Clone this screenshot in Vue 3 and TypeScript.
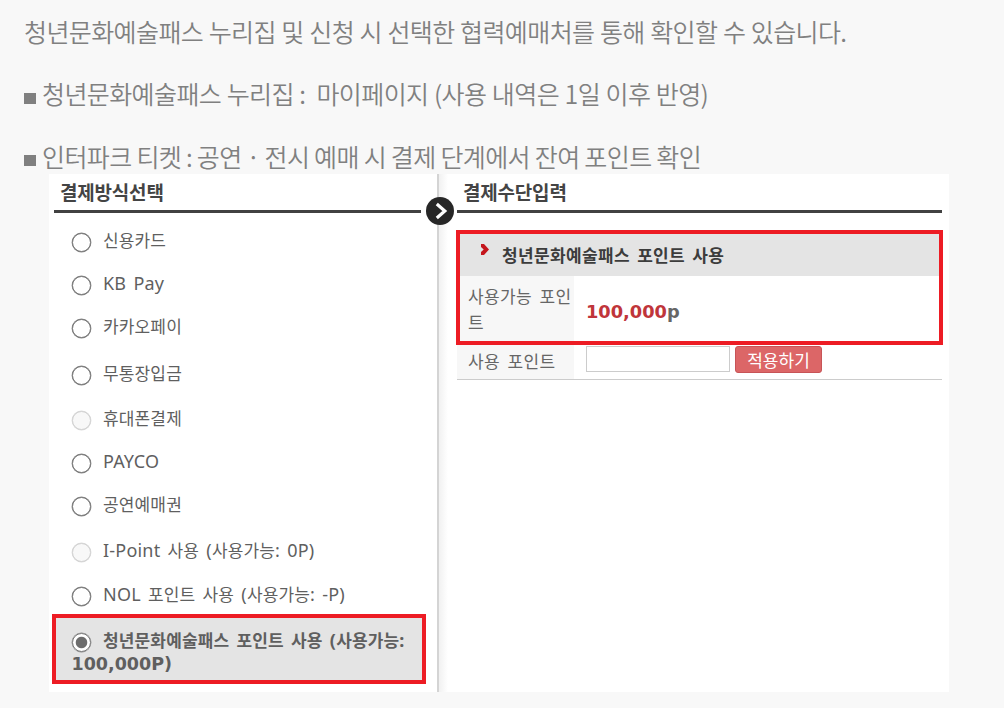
<script setup lang="ts">
interface Option {
  label: string
  disabled?: boolean
}
interface Run {
  text: string
  hangul: boolean
}

const options: Option[] = [
  { label: '신용카드' },
  { label: 'KB Pay' },
  { label: '카카오페이' },
  { label: '무통장입금' },
  { label: '휴대폰결제', disabled: true },
  { label: 'PAYCO' },
  { label: '공연예매권' },
  { label: 'I-Point 사용 (사용가능: 0P)', disabled: true },
  { label: 'NOL 포인트 사용 (사용가능: -P)' },
]

// Splits a label into Hangul and Latin runs so each gets its own type size.
function runs(text: string): Run[] {
  return (text.match(/[가-힣]+|[^가-힣]+/g) ?? []).map((part) => ({
    text: part,
    hangul: /[가-힣]/.test(part),
  }))
}
</script>

<template>
  <main class="page">
    <p class="line intro">청년문화예술패스 누리집 및 신청 시 선택한 협력예매처를 통해 확인할 수 있습니다.</p>
    <p class="line site"><i class="square"></i><span>청년문화예술패스 누리집 :&nbsp; 마이페이지 (사용 내역은 1일 이후 반영)</span></p>
    <p class="line ticket"><i class="square"></i><span>인터파크 티켓 : 공연 · 전시 예매 시 결제 단계에서 잔여 포인트 확인</span></p>

    <section class="panel">
      <div class="left">
        <h2 class="title">결제방식선택</h2>
        <ul class="options">
          <li v-for="o in options" :key="o.label" class="option">
            <i class="radio" :class="{ disabled: o.disabled }"></i>
            <span class="label"><span v-for="(r, i) in runs(o.label)" :key="i" :class="r.hangul ? 'ko' : 'en'">{{ r.text }}</span></span>
          </li>
        </ul>
        <div class="chosen">
          <div class="chosen-row">
            <i class="radio on"></i>
            <span class="label"><span v-for="(r, i) in runs('청년문화예술패스 포인트 사용 (사용가능:')" :key="i" :class="r.hangul ? 'ko' : 'en'">{{ r.text }}</span></span>
          </div>
          <div class="amount">100,000P)</div>
        </div>
      </div>

      <div class="divider">
        <svg class="next" viewBox="0 0 28 28" width="28" height="28">
          <circle cx="14" cy="14" r="14" fill="#272727" />
          <path d="M10.8 7 L18.8 14 L10.8 21" fill="none" stroke="#fff" stroke-width="3.2" />
        </svg>
      </div>

      <div class="right">
        <h2 class="title">결제수단입력</h2>
        <div class="box">
          <div class="box-head">
            <svg class="mark" viewBox="0 0 8 11" width="8" height="11">
              <path d="M0 0H3L8 5.5L3 11H0V8L2.7 5.5L0 3Z" fill="#c4161c" />
            </svg>
            <span>청년문화예술패스 포인트 사용</span>
          </div>
          <div class="box-row">
            <div class="name">사용가능 포인<br />트</div>
            <div class="value"><b>100,000</b>p</div>
          </div>
        </div>
        <div class="use-row">
          <div class="name">사용 포인트</div>
          <input class="field" type="text" aria-label="사용 포인트" />
          <button class="apply" type="button">적용하기</button>
        </div>
      </div>
    </section>
  </main>
</template>

<style>
body {
  margin: 0;
  background: #f8f8f8;
}
</style>

<style scoped>
.page {
  width: 1004px;
  height: 708px;
  overflow: hidden;
  background: #f8f8f8;
  box-sizing: border-box;
  padding-top: 2px;
  font-family: "Noto Sans CJK KR", sans-serif;
}
.line {
  margin: 0;
  padding-left: 24px;
  height: 62px;
  line-height: 58px;
  font-size: 25px;
  font-weight: 350;
  letter-spacing: -0.6px;
  word-spacing: 0.5px;
  color: #808080;
  white-space: nowrap;
  display: flex;
}
.ticket {
  height: 48px;
  line-height: 60px;
  word-spacing: -0.2px;
}
.square {
  flex: none;
  width: 12px;
  height: 11px;
  margin: 29px 6px 0 0;
  background: #808080;
}
.panel {
  width: 900px;
  height: 518px;
  margin-left: 49px;
  background: #fff;
  display: flex;
}
.left {
  width: 388px;
  flex: none;
}
.title {
  margin: 0 0 0 5px;
  width: 367px;
  height: 39px;
  box-sizing: border-box;
  border-bottom: 3px solid #414141;
  padding-left: 6px;
  font-size: 19px;
  font-weight: 700;
  line-height: 35px;
  letter-spacing: -0.2px;
  color: #444;
}
.options {
  list-style: none;
  margin: 7px 0 0;
  padding: 0 0 0 22.5px;
  display: grid;
  grid-template-rows: 44px 42px 44px 50px 40px 46px 40px 52px 36px;
}
.option,
.chosen-row {
  display: flex;
  align-items: center;
}
.radio {
  flex: none;
  box-sizing: border-box;
  width: 19px;
  height: 19px;
  margin-right: 12.5px;
  border: 1.5px solid #767676;
  border-radius: 50%;
  background: #fff;
  box-shadow: 0 0 0 0.4px #8a8a8a;
}
.radio.disabled {
  border-color: #d2d2d2;
  background: #f8f8f8;
  box-shadow: 0 0 0 0.4px #dcdcdc;
}
.radio.on {
  background: radial-gradient(circle, #6c6c6c 5.3px, #fff 6.2px);
}
.label {
  line-height: 24px;
  padding-bottom: 4px;
  color: #5f5f5f;
  white-space: pre;
  word-spacing: 2.3px;
}
.ko {
  font-size: 17px;
  letter-spacing: 0.15px;
}
.en {
  font-family: "Noto Sans", sans-serif;
  font-size: 18px;
  letter-spacing: 0.2px;
}
.chosen {
  box-sizing: border-box;
  width: 374px;
  height: 70px;
  margin-left: 3px;
  border: 4px solid #ed1c24;
  background: #e4e4e4;
  padding: 12px 0 0 15.5px;
  font-weight: 700;
}
.chosen-row {
  height: 24px;
}
.amount {
  font: 700 17.5px/21px "DejaVu Sans", sans-serif;
  color: #5f5f5f;
}
.divider {
  position: relative;
  width: 19px;
  flex: none;
  background: linear-gradient(90deg, #d4d4d4 0 2px, #f1f1f1 2px, #fff 11px);
}
.next {
  position: absolute;
  left: -11px;
  top: 22.5px;
}
.right {
  flex: none;
  width: 487px;
}
.right .title {
  width: 485px;
  margin-left: 1px;
}
.box {
  box-sizing: border-box;
  width: 487px;
  height: 115px;
  margin-top: 17px;
  border: 4px solid #ed1c24;
}
.box-head {
  height: 42px;
  background: #e4e4e4;
  display: flex;
  align-items: flex-start;
  padding-left: 21px;
  font-size: 17px;
  font-weight: 700;
  line-height: 41px;
  letter-spacing: 0.35px;
  word-spacing: 3px;
  color: #3c3c3c;
}
.mark {
  margin: 10px 13px 0 0;
}
.box-row {
  display: flex;
  height: 65px;
}
.name {
  box-sizing: border-box;
  width: 114px;
  flex: none;
  padding: 7px 0 0 8px;
  background: #f7f7f7;
  color: #666;
  font-size: 17px;
  line-height: 26px;
  letter-spacing: 0.4px;
  word-spacing: 3.2px;
  white-space: nowrap;
}
.value {
  padding-left: 12px;
  font: 700 17.8px/71px "DejaVu Sans", sans-serif;
  color: #666;
}
.value b {
  color: #c0353a;
}
.use-row {
  display: flex;
  width: 485px;
  height: 35px;
  box-sizing: border-box;
  margin-left: 1px;
  border-bottom: 1px solid #ccc;
}
.use-row .name {
  width: 117px;
  padding: 3px 0 0 11px;
}
.field {
  box-sizing: border-box;
  width: 144px;
  height: 26px;
  margin: 1px 5px 0 12px;
  border: 1px solid #ccc;
  padding: 0 4px;
  background: #fff;
}
.apply {
  box-sizing: border-box;
  width: 87px;
  height: 27px;
  margin-top: 1px;
  padding: 0;
  border: 1px solid #c75457;
  border-radius: 3px;
  background: #dc6667;
  color: #fff;
  font: 400 17px/23px "Noto Sans CJK KR", sans-serif;
}
</style>
